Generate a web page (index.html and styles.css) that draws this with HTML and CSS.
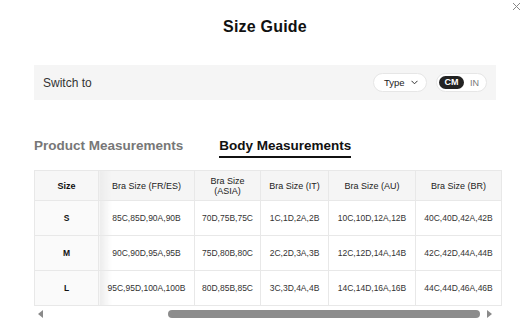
FILE: index.html
```html
<!DOCTYPE html>
<html lang="en">
<head>
    <meta charset="UTF-8">
    <meta name="viewport" content="width=device-width, initial-scale=1.0">
    <title>Size Guide</title>
    <link rel="stylesheet" href="styles.css">
</head>
<body>

    <button class="close" aria-label="Close">
        <svg width="9" height="9" viewBox="0 0 9 9"><path d="M1 1L8 8M8 1L1 8" stroke="#888" stroke-width="1"/></svg>
    </button>

    <div class="modal">
        <h2 class="title">Size Guide</h2>

        <!-- unit switch -->
        <div class="switch-bar">
            <span class="switch-label">Switch to</span>
            <div class="switch-controls">
                <div class="type-select">
                    <span>Type</span>
                    <svg width="7" height="5" viewBox="0 0 7 5"><path d="M0.5 0.8L3.5 3.8L6.5 0.8" fill="none" stroke="#333" stroke-width="1"/></svg>
                </div>
                <div class="unit-toggle">
                    <span class="unit active">CM</span>
                    <span class="unit">IN</span>
                </div>
            </div>
        </div>

        <div class="tabs">
            <span class="tab">Product Measurements</span>
            <span class="tab active">Body Measurements</span>
        </div>

        <div class="table-wrap">
            <table class="size-table">
                <thead>
                    <tr>
                        <th class="col-size">Size</th>
                        <th class="col-fr">Bra Size (FR/ES)</th>
                        <th class="col-asia">Bra Size<br>(ASIA)</th>
                        <th class="col-it">Bra Size (IT)</th>
                        <th class="col-au">Bra Size (AU)</th>
                        <th class="col-br">Bra Size (BR)</th>
                    </tr>
                </thead>
                <tbody>
                    <tr>
                        <td class="col-size">S</td>
                        <td class="col-fr">85C,85D,90A,90B</td>
                        <td>70D,75B,75C</td>
                        <td>1C,1D,2A,2B</td>
                        <td>10C,10D,12A,12B</td>
                        <td>40C,40D,42A,42B</td>
                    </tr>
                    <tr>
                        <td class="col-size">M</td>
                        <td class="col-fr">90C,90D,95A,95B</td>
                        <td>75D,80B,80C</td>
                        <td>2C,2D,3A,3B</td>
                        <td>12C,12D,14A,14B</td>
                        <td>42C,42D,44A,44B</td>
                    </tr>
                    <tr>
                        <td class="col-size">L</td>
                        <td class="col-fr">95C,95D,100A,100B</td>
                        <td>80D,85B,85C</td>
                        <td>3C,3D,4A,4B</td>
                        <td>14C,14D,16A,16B</td>
                        <td>44C,44D,46A,46B</td>
                    </tr>
                </tbody>
            </table>

            <!-- horizontal scrollbar -->
            <div class="scrollbar">
                <span class="arrow arrow-left"></span>
                <div class="track"><div class="thumb"></div></div>
                <span class="arrow arrow-right"></span>
            </div>
        </div>
    </div>

</body>
</html>
```

FILE: styles.css
```css
body {
    margin: 0;
    font-family: "Liberation Sans", Arial, sans-serif;
    background-color: #fff;
    color: #222;
}

.close {
    position: absolute;
    top: 2px;
    right: 9px;
    padding: 0;
    border: none;
    background: none;
    line-height: 0;
}

.modal {
    padding: 17px 34px 0;
}

.title {
    margin: 0;
    font-size: 16px;
    line-height: 20px;
    font-weight: bold;
    text-align: center;
    color: #111;
    letter-spacing: 0.2px;
}

/* Switch bar */
.switch-bar {
    margin-top: 28px;
    height: 35px;
    padding: 0 9px;
    background-color: #f5f5f5;
    display: flex;
    align-items: center;
    justify-content: space-between;
}
.switch-label {
    font-size: 12px;
    color: #333;
}
.switch-controls {
    display: flex;
    align-items: center;
    gap: 9px;
}
.type-select {
    box-sizing: border-box;
    width: 54px;
    height: 19px;
    padding-left: 10px;
    gap: 6px;
    background-color: #fff;
    border: 1px solid #e6e6e6;
    border-radius: 10px;
    display: flex;
    align-items: center;
    font-size: 9.5px;
    color: #222;
}
.unit-toggle {
    box-sizing: border-box;
    width: 51px;
    height: 19px;
    padding: 0 2px;
    background-color: #fff;
    border: 1px solid #e6e6e6;
    border-radius: 10px;
    display: flex;
    align-items: center;
    gap: 6px;
}
.unit {
    font-size: 9px;
    color: #777;
}
.unit.active {
    width: 25px;
    height: 13px;
    line-height: 13px;
    text-align: center;
    border-radius: 7px;
    background-color: #222;
    color: #fff;
    font-weight: bold;
}

/* Tabs */
.tabs {
    margin-top: 37px;
    display: flex;
    gap: 36px;
}
.tab {
    font-size: 13.5px;
    line-height: 18px;
    font-weight: bold;
    color: #777;
    padding-bottom: 1px;
    border-bottom: 2px solid transparent;
}
.tab.active {
    color: #111;
    border-bottom-color: #111;
}

/* Table */
.table-wrap {
    margin-top: 12px;
}
.size-table {
    width: 462px;
    border-collapse: collapse;
    table-layout: fixed;
}
.size-table th,
.size-table td {
    border: 1px solid #e8e8e8;
    text-align: center;
    padding: 0;
    color: #333;
}
.size-table th {
    height: 29px;
    font-size: 9px;
    line-height: 10px;
    font-weight: normal;
    color: #222;
    background-color: #f5f5f5;
}
.size-table td {
    height: 34px;
    font-size: 8.5px;
    background-color: #fff;
}
.size-table .col-size {
    width: 63px;
    font-weight: bold;
    color: #111;
    background-color: #f7f7f7;
}
.size-table td.col-size {
    background-color: #fafafa;
}
.size-table .col-fr {
    width: 95px;
    background-image: linear-gradient(to right, #ececec, rgba(255, 255, 255, 0) 12px);
}
.size-table .col-asia { width: 65px; }
.size-table .col-it { width: 67px; }
.size-table .col-au { width: 86px; }
.size-table .col-br { width: 85px; }

/* Scrollbar */
.scrollbar {
    height: 16px;
    display: flex;
    align-items: center;
    gap: 4px;
    padding: 0 4px;
}
.arrow {
    width: 0;
    height: 0;
    border-top: 4px solid transparent;
    border-bottom: 4px solid transparent;
}
.arrow-left {
    border-right: 5px solid #8a8a8a;
}
.arrow-right {
    border-left: 5px solid #8a8a8a;
}
.track {
    flex: 1;
    height: 8px;
    display: flex;
    justify-content: flex-end;
}
.thumb {
    width: 312px;
    margin-right: 3px;
    border-radius: 4px;
    background-color: #8c8c8c;
}
```
